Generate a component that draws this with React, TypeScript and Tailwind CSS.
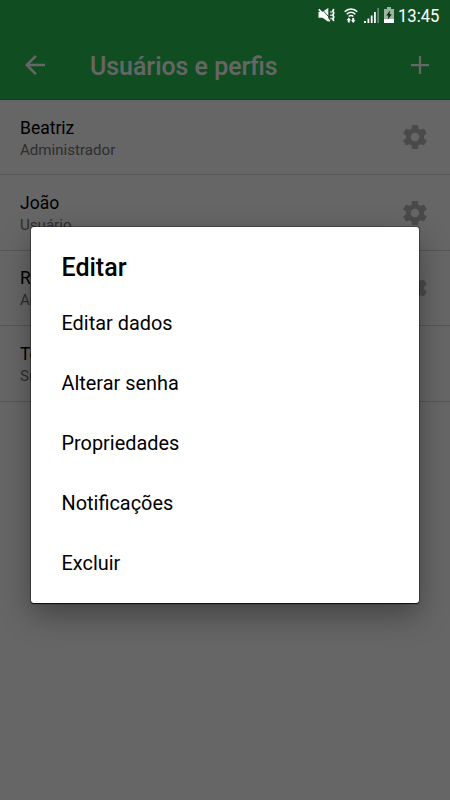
// src/App.tsx

import { useState } from "react";

const users = [
  { name: "Beatriz", role: "Administrador", editable: true },
  { name: "João", role: "Usuário", editable: true },
  { name: "Rafael", role: "Administrador", editable: true },
  { name: "Teste", role: "Supervisor", editable: false },
];

const actions = ["Editar dados", "Alterar senha", "Propriedades", "Notificações", "Excluir"];

function GearIcon() {
  return (
    <svg viewBox="0 0 24 24" className="size-[30px] fill-[#b8b8b8]">
      <path d="M19.14 12.94c.04-.3.06-.61.06-.94 0-.32-.02-.64-.07-.94l2.03-1.58a.49.49 0 0 0 .12-.61l-1.92-3.32a.488.488 0 0 0-.59-.22l-2.39.96c-.5-.38-1.03-.7-1.62-.94l-.36-2.54a.484.484 0 0 0-.48-.41h-3.84c-.24 0-.43.17-.47.41l-.36 2.54c-.59.24-1.13.57-1.62.94l-2.39-.96c-.22-.08-.47 0-.59.22L2.74 8.87c-.12.21-.08.47.12.61l2.03 1.58c-.05.3-.09.63-.09.94s.02.64.07.94l-2.03 1.58a.49.49 0 0 0-.12.61l1.92 3.32c.12.22.37.29.59.22l2.39-.96c.5.38 1.03.7 1.62.94l.36 2.54c.05.24.24.41.48.41h3.84c.24 0 .44-.17.47-.41l.36-2.54c.59-.24 1.13-.56 1.62-.94l2.39.96c.22.08.47 0 .59-.22l1.92-3.32c.12-.22.07-.47-.12-.61l-2.01-1.58zM12 15.4c-1.88 0-3.4-1.52-3.4-3.4s1.52-3.4 3.4-3.4 3.4 1.52 3.4 3.4-1.52 3.4-3.4 3.4z" />
    </svg>
  );
}

function StatusBar() {
  return (
    <div className="absolute inset-x-0 top-0 h-[30px] flex items-center justify-end pr-[11px] text-white">
      {/* muted, vibrating */}
      <svg viewBox="0 0 17 16" className="w-[17px] h-4 mr-[9px]" fill="currentColor">
        <path d="M.5 4.8h4L10.3 1v13.8l-5.8-4H.5z" />
        <path d="M3.5 1.8 12 11.2" stroke="#104e22" strokeWidth=".9" />
        <path d="M.8 2.2 11.8 14.2" stroke="currentColor" strokeWidth="1.6" />
        <path d="M13 4.2v1.5M13 7.5v1.5M13 10.8v1.500" stroke="currentColor" strokeWidth="1.4" />
        <path d="m15.8 2-1 2 1 2-1 2 1 2-1 2 1 2" fill="none" stroke="currentColor" strokeWidth="1.7" />
      </svg>
      {/* wifi with traffic arrows */}
      <svg viewBox="0 0 14 15" className="w-[14px] h-[15px] mr-[6px]" fill="none" stroke="currentColor" strokeWidth="1.5">
        <path d="M.7 3.8C4.2.1 9.8.1 13.3 3.8M2.7 6.2c2.4-2.5 6.2-2.5 8.6 0M4.7 8.5c1.3-1.3 3.3-1.3 4.6 0" />
        <path d="M4.8 9.5 7 12.2H5.8V14.5H3.8V12.2H2.6zM9.2 15l-2.2-2.7h1.2V10h2v2.3h1.2z" fill="currentColor" stroke="none" />
      </svg>
      {/* signal strength */}
      <svg viewBox="0 0 15 15" className="w-[15px] h-[15px] mr-[5px]" fill="currentColor">
        <path d="M0 13h2v2H0zM3.5 10.5h1.8V15H3.5zM6.8 7.5h1.8V15H6.8zM10 4h1.8v11H10z" />
        <path d="M13.3 0H15v15h-1.7z" opacity=".35" />
      </svg>
      {/* battery charging */}
      <svg viewBox="0 0 10 16" className="w-[10px] h-4 mr-1">
        <path d="M3 0h4v2h3v14H0V2h3z" fill="#9db4a3" />
        <path d="M0 12h10v4H0z" fill="#fff" />
        <path d="M6 3.5 2.3 8.5h2L3.8 12.5 7.8 7.3H5.6z" fill="#062b10" />
      </svg>
      <span className="w-[41px] pt-px text-[18.5px] leading-[30px] whitespace-nowrap origin-left scale-x-[0.9]">13:45</span>
    </div>
  );
}

function App() {
  const [open, setOpen] = useState(true);

  return (
    <div className="relative w-[450px] h-[800px] overflow-hidden bg-white font-[Roboto,sans-serif] text-black">
      <header className="h-[100px] pt-[30px] pl-5 pr-[15px] flex items-center bg-[#28c355] text-white border-b border-[#25a64b]">
        <svg viewBox="0 0 24 24" className="size-[30px] fill-white">
          <path d="M20 11H7.83l5.59-5.59L12 4l-8 8 8 8 1.41-1.41L7.83 13H20z" />
        </svg>
        <h1 className="ml-10 pt-1 flex-1 text-[24.9px] leading-[30px] font-medium">Usuários e perfis</h1>
        <button aria-label="Adicionar">
          <svg viewBox="0 0 24 24" className="size-[30px] block fill-white">
            <path d="M19.2 12.9H12.9v6.3h-1.8v-6.3H4.8v-1.8h6.3V4.8h1.8v6.3h6.3z" />
          </svg>
        </button>
      </header>

      <ul>
        {users.map((user) => (
          <li key={user.name} className="h-[75.4px] px-5 flex items-center justify-between border-b border-[#d6d6d6]">
            <div className="pt-[3px]">
              <p className="text-[17.5px] leading-[22px]">{user.name}</p>
              <p className="text-[15.1px] leading-[22px] text-[#737373]">{user.role}</p>
            </div>
            {user.editable && (
              <button aria-label="Editar" onClick={() => setOpen(true)}>
                <GearIcon />
              </button>
            )}
          </li>
        ))}
      </ul>

      {open && (
        <div className="absolute inset-0 bg-black/60 flex flex-col items-center pt-[226.5px]" onClick={() => setOpen(false)}>
          <div
            role="dialog"
            className="w-[388px] h-[376.5px] rounded-[3px] bg-white pl-[30.5px] pt-[23px] shadow-[0_1px_1px_rgba(0,0,0,0.7),0_0_1px_1px_rgba(0,0,0,0.3),0_12px_30px_rgba(0,0,0,0.35)]"
          >
            <h2 className="h-9 text-[25px] leading-9 font-medium">Editar</h2>
            <ul className="pt-2">
              {actions.map((action) => (
                <li key={action} className="h-[60px] flex items-center text-[19.9px]">
                  {action}
                </li>
              ))}
            </ul>
          </div>
        </div>
      )}

      <StatusBar />
    </div>
  );
}

export default App;
